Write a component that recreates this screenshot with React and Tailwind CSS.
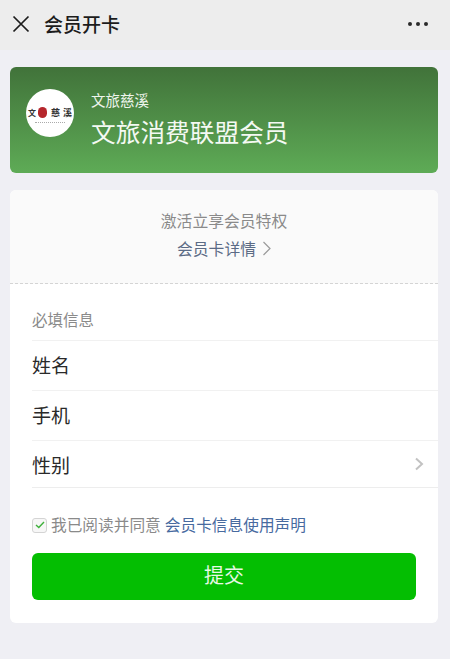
import React from "react";

const font = { fontFamily: '"Noto Sans CJK SC", "Liberation Sans", sans-serif' };

function Row({ label, chevron, short }) {
  return (
    <div className={short ? "ml-[22px] flex h-[47px] items-center justify-between border-t border-[#f1f1f1] pr-[14px]" : "ml-[22px] flex h-[50px] items-center justify-between border-t border-[#f1f1f1] pb-[3px] pr-[14px]"}>
      <span className="text-[19px] leading-none text-[#2a2a2a]">{label}</span>
      {chevron && (
        <svg width="10" height="14" viewBox="0 0 10 14" fill="none">
          <path d="M2 1.5 L8 7 L2 12.5" stroke="#c2c2c2" strokeWidth="2" />
        </svg>
      )}
    </div>
  );
}

export default function App() {
  return (
    <div className="flex h-[659px] w-[450px] flex-col overflow-hidden bg-[#efeff4]" style={font}>
      <header className="flex h-[50px] shrink-0 items-center justify-between bg-[#ededed] pb-[3px] pl-[12px] pr-[22px]">
        <div className="flex items-center gap-[14px]">
          <svg width="18" height="18" viewBox="0 0 18 18" fill="none">
            <path d="M1.5 1.5 L16.5 16.5 M16.5 1.5 L1.5 16.5" stroke="#1c1c1c" strokeWidth="1.7" />
          </svg>
          <span className="text-[19px] font-medium leading-none text-[#1c1c1c]">会员开卡</span>
        </div>
        <div className="flex gap-[4px]">
          <i className="block h-[4px] w-[4px] rounded-full bg-[#2a2a2a]" />
          <i className="block h-[4px] w-[4px] rounded-full bg-[#2a2a2a]" />
          <i className="block h-[4px] w-[4px] rounded-full bg-[#2a2a2a]" />
        </div>
      </header>

      <section className="mx-[10px] mt-[17px] flex h-[106px] w-[428px] shrink-0 items-start rounded-[6px] bg-gradient-to-b from-[#41733a] to-[#5eab56] pl-[16px] pt-[22px]">
        <div className="flex h-[48px] w-[48px] shrink-0 flex-col items-center justify-center rounded-full bg-white pt-[4px]">
          <div className="flex items-center text-[8px] font-bold leading-none text-[#333]">
            <span>文</span>
            <span className="ml-[2px] block h-[11px] w-[9px] rounded-full bg-[#b5262c]" />
            <span className="ml-[4px] text-[9px]">慈</span>
            <span className="ml-[3px] text-[9px]">溪</span>
          </div>
          <div className="mt-[4px] h-[1px] w-[30px] border-t border-dotted border-[#aaa]" />
        </div>
        <div className="ml-[17px] mt-[4px] flex flex-col">
          <span className="text-[14.5px] leading-none text-[#eef5ec]">文旅慈溪</span>
          <span className="mt-[11px] text-[24.7px] leading-none text-[#f4f9f3]">文旅消费联盟会员</span>
        </div>
      </section>

      <section className="mx-[10px] mt-[17px] flex w-[428px] shrink-0 flex-col overflow-hidden rounded-[6px] bg-white">
        <div className="flex h-[94px] flex-col items-center border-b border-dashed border-[#d4d4d4] bg-[#fafafa] pt-[23px]">
          <span className="text-[15.8px] leading-none text-[#8a8a8a]">激活立享会员特权</span>
          <div className="mt-[12px] flex items-center gap-[6px] pl-[1px]">
            <span className="text-[15.8px] leading-none text-[#5b6b85]">会员卡详情</span>
            <svg width="10" height="15" viewBox="0 0 10 15" fill="none">
              <path d="M1.5 1 L8 7.5 L1.5 14" stroke="#9a9a9a" strokeWidth="1.2" />
            </svg>
          </div>
        </div>

        <div className="flex h-[56px] items-center pl-[22px] pt-[16px] text-[15.5px] leading-none text-[#8a8a8a]">必填信息</div>

        <Row label="姓名" />
        <Row label="手机" />
        <Row label="性别" chevron short />
        <div className="ml-[22px] border-t border-[#ededed]" />

        <div className="flex items-center pl-[22px] pt-[27px]">
          <span className="flex h-[15px] w-[15px] items-center justify-center rounded-[3px] border border-[#d4d4d4] bg-[#f7f7f7]">
            <svg width="10" height="8" viewBox="0 0 10 8" fill="none">
              <path d="M1 4 L3.8 6.6 L9 1" stroke="#3fb13c" strokeWidth="1.4" />
            </svg>
          </span>
          <span className="ml-[4px] text-[15.7px] leading-[20px] text-[#8a8a8a]">我已阅读并同意</span>
          <span className="ml-[4px] text-[15.7px] leading-[20px] text-[#476a9f]">会员卡信息使用声明</span>
        </div>

        <button className="mb-[23px] ml-[22px] mt-[18px] flex h-[47px] w-[384px] items-center justify-center rounded-[6px] bg-[#04be02] pb-[3px] text-[20px] leading-none text-[#e8f8e6]">
          提交
        </button>
      </section>
    </div>
  );
}
